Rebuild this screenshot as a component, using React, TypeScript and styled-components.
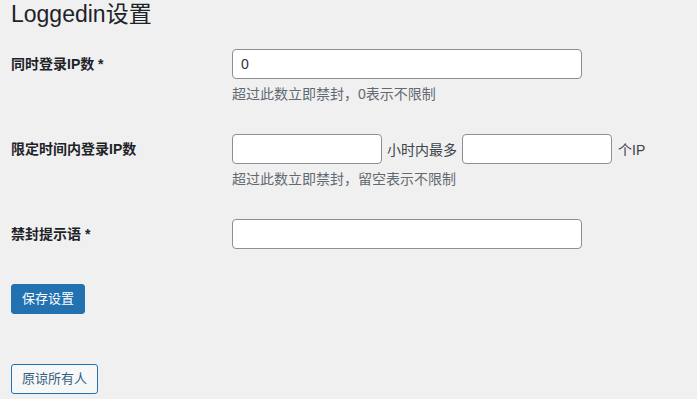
import { FC } from 'react';
import styled, { createGlobalStyle } from 'styled-components';

const GlobalStyle = createGlobalStyle`
    html, body {
        margin: 0;
        padding: 0;
        background: #f0f0f1;
    }

    body {
        font-family: "Liberation Sans", "Noto Sans CJK SC", sans-serif;
        font-size: 14px;
        color: #1d2327;
    }
`;

const Wrap = styled.div`
    padding: 0 11px;
    height: 399px;
    overflow: hidden;
`;

const Title = styled.h1`
    margin: 0;
    font-size: 23px;
    line-height: 29px;
    font-weight: 400;
    color: #1d2327;
`;

const Form = styled.form`
    margin-top: 5px;
`;

const Row = styled.div`
    display: grid;
    grid-template-columns: 221px 1fr;
    padding: 15px 0;
`;

const Label = styled.label`
    padding-top: 5px;
    font-weight: 700;
    line-height: 20px;
    color: #1d2327;
`;

const Field = styled.div`
    display: flex;
    flex-direction: column;
    align-items: flex-start;
`;

const Inline = styled.div`
    display: flex;
    align-items: center;
    gap: 5px;
    color: #3c434a;

    span:last-child {
        margin-left: 1px;
    }
`;

const Input = styled.input<{ $width: number }>`
    box-sizing: border-box;
    width: ${({ $width }) => $width}px;
    height: 30px;
    margin: 0;
    padding: 0 8px;
    border: 1px solid #8c8f94;
    border-radius: 4px;
    background: #fff;
    font-family: inherit;
    font-size: 14px;
    color: #2c3338;
    outline: none;
`;

const Description = styled.p`
    margin: 6px 0 0;
    line-height: 19px;
    color: #646970;
`;

const Button = styled.button<{ $primary?: boolean }>`
    box-sizing: border-box;
    height: 30px;
    padding: 0 10px;
    border-radius: 3px;
    font-family: inherit;
    font-size: 13px;
    line-height: 28px;
    cursor: pointer;
    border: 1px solid #2271b1;
    background: ${({ $primary }) => ($primary ? '#2271b1' : '#f6f7f7')};
    color: ${({ $primary }) => ($primary ? '#fff' : '#35607f')};
`;

const Actions = styled.div<{ $top: number }>`
    margin-top: ${({ $top }) => $top}px;
`;

const App: FC = () => (
    <>
        <GlobalStyle />
        <Wrap>
            <Title>Loggedin设置</Title>
            <Form onSubmit={(e) => e.preventDefault()}>
                <Row>
                    <Label>同时登录IP数 *</Label>
                    <Field>
                        <Input $width={350} defaultValue="0" />
                        <Description>超过此数立即禁封，0表示不限制</Description>
                    </Field>
                </Row>
                <Row>
                    <Label>限定时间内登录IP数</Label>
                    <Field>
                        <Inline>
                            <Input $width={150} />
                            <span>小时内最多</span>
                            <Input $width={150} />
                            <span>个IP</span>
                        </Inline>
                        <Description>超过此数立即禁封，留空表示不限制</Description>
                    </Field>
                </Row>
                <Row>
                    <Label>禁封提示语 *</Label>
                    <Field>
                        <Input $width={350} />
                    </Field>
                </Row>
                <Actions $top={20}>
                    <Button $primary type="submit">保存设置</Button>
                </Actions>
                <Actions $top={50}>
                    <Button type="button">原谅所有人</Button>
                </Actions>
            </Form>
        </Wrap>
    </>
);

export default App;
